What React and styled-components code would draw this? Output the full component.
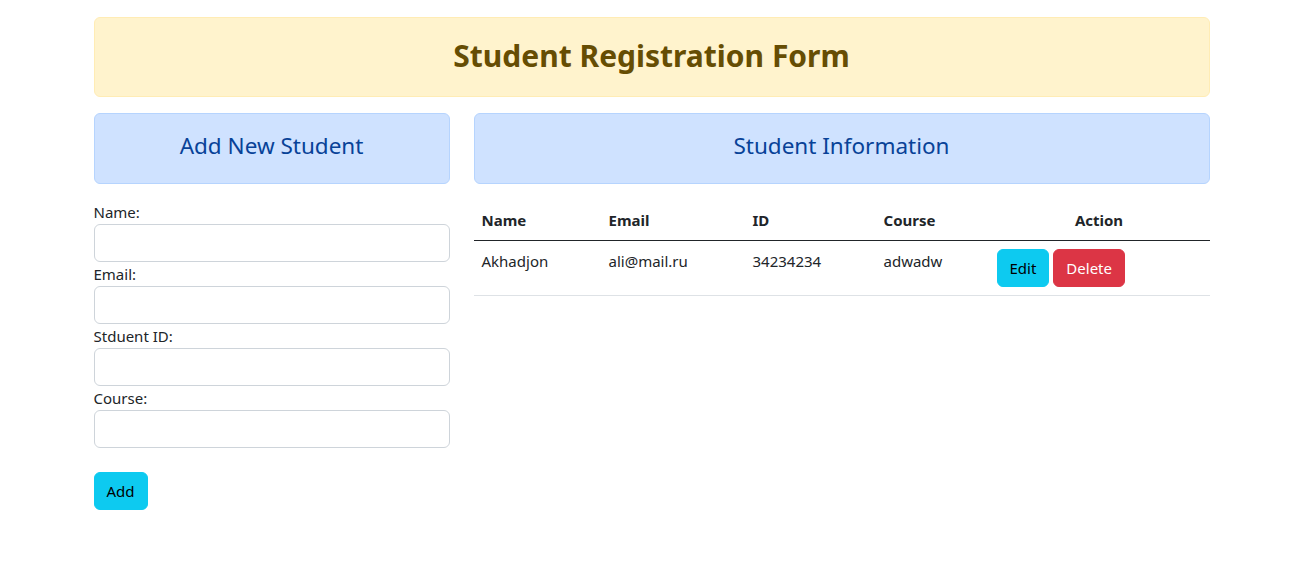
import React, { useState } from 'react'
import styled, { createGlobalStyle } from 'styled-components'

const GlobalStyle = createGlobalStyle`
  * { box-sizing: border-box; }
  body {
    margin: 0;
    font-family: "Segoe UI", "Noto Sans", "Open Sans", sans-serif;
    font-size: 15px;
    line-height: 24px;
    color: #212529;
    background: #fff;
  }
`

const Container = styled.div`
  width: 1120px;
  margin: 0 auto;
  padding: 17px 4px 0 0;
`

const Alert = styled.div`
  padding: 16px;
  margin-bottom: 16px;
  border-radius: 6px;
  text-align: center;
  border: 1px solid ${p => (p.$tone === 'warning' ? '#ffecb5' : '#b6d4fe')};
  background: ${p => (p.$tone === 'warning' ? '#fff3cd' : '#cfe2ff')};
  color: ${p => (p.$tone === 'warning' ? '#664d03' : '#084298')};
`

const Title = styled.h2`
  margin: 0 0 5px;
  padding-top: 3px;
  font-size: 30px;
  font-weight: 700;
  line-height: 38.4px;
`

const SubTitle = styled.h4`
  margin: 0 0 6px;
  padding-top: 2px;
  font-size: 22.5px;
  font-weight: 400;
  line-height: 28.8px;
`

const Row = styled.div`
  display: flex;
  gap: 24px;
`

const LeftCol = styled.div`
  width: 356px;
  flex: none;
`

const RightCol = styled.div`
  flex: 1;
`

const Form = styled.form`
  display: flex;
  flex-direction: column;
`

const Label = styled.label`
  display: block;
`

const Input = styled.input`
  display: block;
  width: 100%;
  height: 38px;
  padding: 6px 12px;
  font: inherit;
  border: 1px solid #ced4da;
  border-radius: 6px;
  background: #fff;
  outline: none;
`

const Button = styled.button`
  display: inline-block;
  height: 38px;
  padding: 6px 12px;
  font: inherit;
  line-height: 24px;
  border: 1px solid ${p => (p.$variant === 'danger' ? '#dc3545' : '#0dcaf0')};
  border-radius: 6px;
  background: ${p => (p.$variant === 'danger' ? '#dc3545' : '#0dcaf0')};
  color: ${p => (p.$variant === 'danger' ? '#fff' : '#000')};
  cursor: pointer;
`

const AddButton = styled(Button)`
  align-self: flex-start;
  margin-top: 24px;
`

const Table = styled.table`
  width: 100%;
  border-collapse: collapse;
`

const Th = styled.th`
  padding: 8px;
  vertical-align: top;
  text-align: ${p => (p.$center ? 'center' : 'left')};
  font-weight: 700;
  width: ${p => p.$w}px;
  border-bottom: 1px solid #212529;
`

const Td = styled.td`
  padding: 8px;
  vertical-align: top;
  border-bottom: 1px solid #dee2e6;
`

const Actions = styled.div`
  display: flex;
  gap: 4px;
`

const fields = [
  { key: 'name', label: 'Name:' },
  { key: 'email', label: 'Email:' },
  { key: 'id', label: 'Stduent ID:' },
  { key: 'course', label: 'Course:' },
]

export default function App() {
  const [students] = useState([
    { name: 'Akhadjon', email: 'ali@mail.ru', id: '34234234', course: 'adwadw' },
  ])
  return (
    <>
      <GlobalStyle />
      <Container>
        <Alert $tone="warning">
          <Title>Student Registration Form</Title>
        </Alert>
        <Row>
          <LeftCol>
            <Alert>
              <SubTitle>Add New Student</SubTitle>
            </Alert>
            <Form onSubmit={e => e.preventDefault()}>
              {fields.map(f => (
                <div key={f.key}>
                  <Label htmlFor={f.key}>{f.label}</Label>
                  <Input id={f.key} type="text" />
                </div>
              ))}
              <AddButton type="submit">Add</AddButton>
            </Form>
          </LeftCol>
          <RightCol>
            <Alert>
              <SubTitle>Student Information</SubTitle>
            </Alert>
            <Table>
              <thead>
                <tr>
                  <Th $w={127}>Name</Th>
                  <Th $w={144}>Email</Th>
                  <Th $w={131}>ID</Th>
                  <Th $w={113}>Course</Th>
                  <Th $center>Action</Th>
                </tr>
              </thead>
              <tbody>
                {students.map(s => (
                  <tr key={s.id}>
                    <Td>{s.name}</Td>
                    <Td>{s.email}</Td>
                    <Td>{s.id}</Td>
                    <Td>{s.course}</Td>
                    <Td>
                      <Actions>
                        <Button>Edit</Button>
                        <Button $variant="danger">Delete</Button>
                      </Actions>
                    </Td>
                  </tr>
                ))}
              </tbody>
            </Table>
          </RightCol>
        </Row>
      </Container>
    </>
  )
}
